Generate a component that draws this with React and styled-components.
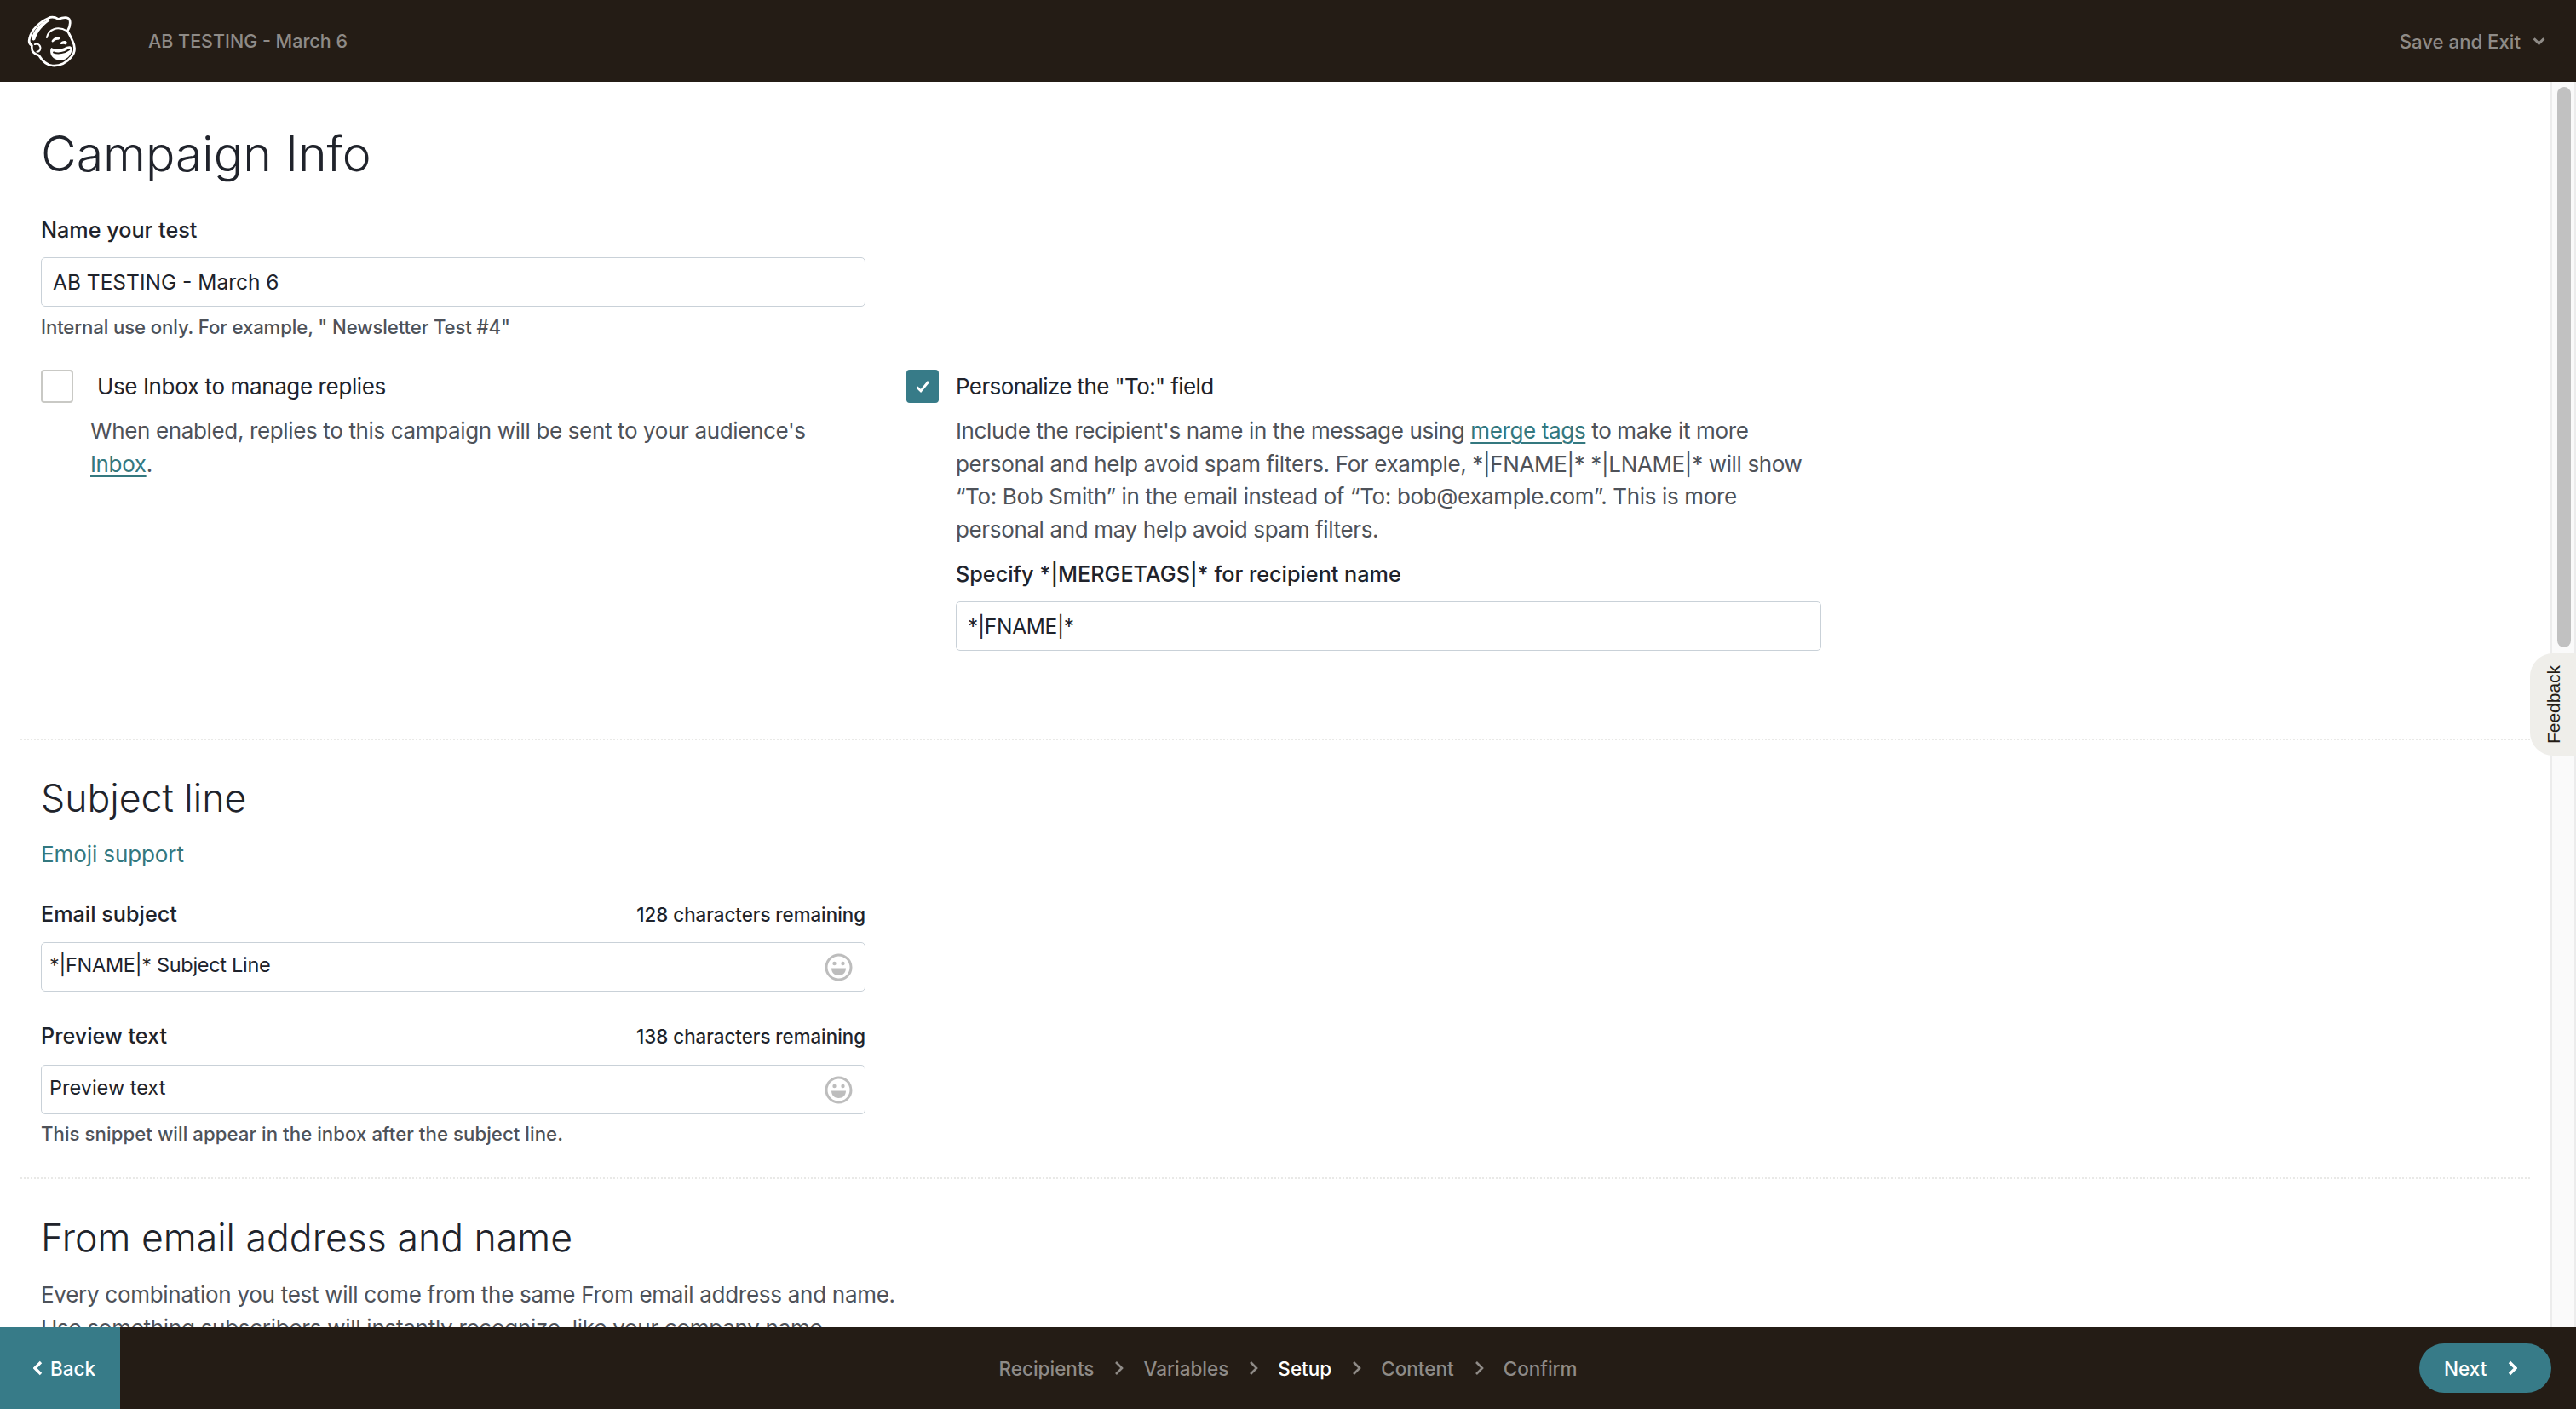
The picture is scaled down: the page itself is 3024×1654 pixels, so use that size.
import React from "react";
import styled, { createGlobalStyle } from "styled-components";

const GlobalStyle = createGlobalStyle`
  html, body {
    margin: 0;
    padding: 0;
    height: 100%;
    overflow: hidden;
    background: #fff;
  }
  * {
    box-sizing: border-box;
  }
`;

const Page = styled.div`
  width: 3024px;
  height: 1654px;
  display: flex;
  flex-direction: column;
  font-family: Inter, "Liberation Sans", sans-serif;
  color: #241c15;
`;

const TopBar = styled.header`
  height: 96px;
  flex: none;
  background: #241c15;
  display: flex;
  align-items: center;
  padding: 0 30px 0 31px;
`;

const CampaignName = styled.span`
  margin-left: 83px;
  font-size: 21.5px;
  font-weight: 500;
  color: #8f8b87;
`;

const SaveExit = styled.div`
  margin-left: auto;
  margin-right: 6px;
  display: flex;
  align-items: center;
  gap: 14px;
  font-size: 22.2px;
  font-weight: 500;
  color: #8f8b87;
`;

const Body = styled.div`
  flex: 1;
  min-height: 0;
  display: flex;
  position: relative;
`;

const Scroller = styled.main`
  flex: 1;
  min-width: 0;
  overflow: hidden;
  padding: 0 24px;
`;

const Track = styled.div`
  width: 30px;
  flex: none;
  background: #fafafa;
  border-left: 2px solid #ececec;
  border-right: 2px solid #ececec;
  padding: 6px 4px 0 6px;
`;

const Thumb = styled.div`
  height: 658px;
  border-radius: 8px;
  background: #c1c1c1;
`;

const Feedback = styled.div`
  position: absolute;
  top: 671px;
  right: 0;
  width: 54px;
  height: 120px;
  border-radius: 27px 0 0 27px;
  background: #efeeea;
  display: flex;
  align-items: center;
  justify-content: center;
  font-family: "Liberation Sans", Arial, sans-serif;
  font-size: 21px;
  color: #241c15;

  & span {
    transform: translateX(1px) rotate(-90deg);
  }
`;

const Section = styled.section`
  padding: ${(p) => p.$pad || "0 24px"};
  border-bottom: ${(p) => (p.$rule ? "2px dotted #e9e9e7" : "none")};
`;

const PageTitle = styled.h1`
  margin: 0;
  font-size: 57.2px;
  line-height: 72px;
  font-weight: 300;
  color: #20232b;
`;

const SectionTitle = styled.h2`
  margin: 0;
  font-size: 44.6px;
  line-height: 56px;
  font-weight: 300;
  color: #20232b;
`;

const Label = styled.div`
  margin: ${(p) => p.$margin || "0"};
  font-size: 25.2px;
  line-height: 34px;
  font-weight: 500;
  color: #20232b;
`;

const LabelRow = styled.div`
  width: 968px;
  margin-top: ${(p) => p.$top};
  display: flex;
  justify-content: space-between;
  align-items: center;
`;

const Remaining = styled.span`
  font-size: 22.3px;
  font-weight: 500;
  color: #20232b;
`;

const Field = styled.div`
  width: ${(p) => p.$width || "968px"};
  height: 58px;
  margin: ${(p) => p.$margin || "0"};
  padding: 0 ${(p) => p.$right || "13px"} 0 ${(p) => p.$left || "13px"};
  border: 1.5px solid #c9d1d8;
  border-radius: 5px;
  background: #fff;
  display: flex;
  align-items: center;
  justify-content: space-between;
  color: #20232b;
`;

const FieldText = styled.span`
  font-size: ${(p) => p.$size || "24.5px"};
  letter-spacing: ${(p) => p.$track || "0"};
  transform: translateY(${(p) => p.$lift || "0"});
`;

const Help = styled.div`
  margin-top: ${(p) => p.$top};
  font-size: 22.2px;
  line-height: 32px;
  font-weight: 500;
  letter-spacing: ${(p) => p.$track || "0"};
  color: #4e5259;
`;

const OptionGrid = styled.div`
  display: grid;
  grid-template-columns: 1016px 1100px;
  margin-top: 34px;
`;

const Option = styled.div`
  display: flex;
  flex-direction: column;
`;

const OptionHead = styled.div`
  display: flex;
  align-items: center;
  gap: ${(p) => p.$gap};
  height: 39px;
  font-size: 26px;
  letter-spacing: ${(p) => p.$track};
  color: #20232b;
`;

const Box = styled.div`
  width: 38px;
  height: 39px;
  flex: none;
  border-radius: 4px;
  background: ${(p) => (p.$on ? "#377b88" : "#fff")};
  border: 2px solid ${(p) => (p.$on ? "#377b88" : "#c9c9c5")};
  display: flex;
  align-items: center;
  justify-content: center;
`;

const Description = styled.p`
  margin: ${(p) => p.$margin};
  max-width: ${(p) => p.$max};
  font-size: 26px;
  line-height: 38.5px;
  letter-spacing: ${(p) => p.$track || "-0.36px"};
  color: #4e5259;
`;

const TextLink = styled.a`
  color: #34787f;
  text-decoration: underline;
  text-underline-offset: 4px;
  text-decoration-thickness: 2px;
`;

const PlainLink = styled.a`
  display: block;
  margin-top: 19px;
  font-size: 26px;
  line-height: 38px;
  letter-spacing: -0.1px;
  color: #34787f;
`;

const BottomBar = styled.footer`
  height: 96px;
  flex: none;
  background: #241c15;
  display: grid;
  grid-template-columns: 1fr auto 1fr;
  align-items: center;
`;

const BackButton = styled.div`
  width: 141px;
  height: 96px;
  padding-left: 39px;
  background: #377b88;
  color: #fff;
  display: flex;
  align-items: center;
  gap: 8px;
  font-size: 22.5px;
  font-weight: 500;
`;

const Steps = styled.nav`
  display: flex;
  align-items: center;
  gap: 23px;
`;

const Step = styled.span`
  font-size: 22.5px;
  font-weight: 500;
  color: ${(p) => (p.$active ? "#fff" : "#8f8b87")};
`;

const NextButton = styled.div`
  justify-self: end;
  margin-right: 29px;
  width: 155px;
  height: 58px;
  padding-left: 29px;
  border-radius: 29px;
  background: #377b88;
  color: #fff;
  display: flex;
  align-items: center;
  gap: 24px;
  font-size: 22.5px;
  font-weight: 500;
`;

const Logo = () => (
  <svg width="60" height="62" viewBox="90 52 176 184" aria-hidden="true">
    <path
      fill="#241c15"
      stroke="#fff"
      strokeWidth="8"
      strokeLinejoin="round"
      d="M100 135C105 105 140 75 165 65 175 60 190 62 200 68 215 62 235 58 240 72 244 88 238 100 232 110 240 120 245 135 250 145 260 165 258 185 245 200 230 220 205 232 180 230 160 228 145 215 133 195 120 190 105 185 108 160 98 155 97 145 100 135Z"
    />
    <path
      fill="#fff"
      d="M107 134C112 108 138 82 164 70 170 68 172 72 168 76 146 92 128 112 120 138 116 146 106 142 107 134Z"
    />
    <path
      fill="none"
      stroke="#fff"
      strokeWidth="6"
      strokeLinecap="round"
      d="M160 132C166 104 196 90 232 110"
    />
    <path
      fill="none"
      stroke="#fff"
      strokeWidth="6"
      strokeLinecap="round"
      d="M118 156C130 150 142 162 136 176 134 180 130 182 126 182"
    />
    <path
      fill="#fff"
      d="M176 168C186 174 206 176 222 168 232 162 244 160 247 168 250 182 240 200 224 208 206 216 188 210 178 198 172 190 170 174 176 168Z"
    />
    <path
      fill="none"
      stroke="#241c15"
      strokeWidth="6"
      strokeLinecap="round"
      d="M184 184C200 190 222 186 238 174"
    />
    <path
      fill="#fff"
      d="M178 142C184 132 196 128 204 132 208 136 204 140 198 140 190 140 186 144 182 148 178 150 175 146 178 142ZM208 150C214 142 226 142 230 148 232 154 228 158 222 156 216 154 212 156 210 156 206 156 206 152 208 150Z"
    />
  </svg>
);

const Chevron = ({ dir = "right", size = 18, color = "#fff", width = 3.4 }) => (
  <svg width={size} height={size * 1.5} viewBox="0 0 12 18" aria-hidden="true">
    <path
      d={dir === "right" ? "M3 2l7 7-7 7" : "M9 2L2 9l7 7"}
      fill="none"
      stroke={color}
      strokeWidth={width}
    />
  </svg>
);

const ChevronDown = () => (
  <svg width="15" height="11" viewBox="0 0 14 10" aria-hidden="true">
    <path d="M1.5 2l5.5 5.5L12.5 2" fill="none" stroke="#8f8b87" strokeWidth="2.8" />
  </svg>
);

const Check = () => (
  <svg width="20" height="20" viewBox="0 0 20 20" aria-hidden="true">
    <path d="M3.5 10.5l4.5 4.5 9-11" fill="none" stroke="#fff" strokeWidth="2.8" />
  </svg>
);

const Smiley = () => (
  <svg width="33" height="33" viewBox="0 0 33 33" aria-hidden="true">
    <circle cx="16.5" cy="16.5" r="14.5" fill="none" stroke="#bdbdbd" strokeWidth="3" />
    <circle cx="11.5" cy="12" r="2.2" fill="#bdbdbd" />
    <circle cx="21.5" cy="12" r="2.2" fill="#bdbdbd" />
    <path d="M8 17.5h17c0 5-3.5 8.5-8.5 8.5S8 22.5 8 17.5z" fill="#bdbdbd" />
  </svg>
);

const STEPS = ["Recipients", "Variables", "Setup", "Content", "Confirm"];

const App = () => {
  return (
    <Page>
      <GlobalStyle />
      <TopBar>
        <Logo />
        <CampaignName>AB TESTING - March 6</CampaignName>
        <SaveExit>
          Save and Exit
          <ChevronDown />
        </SaveExit>
      </TopBar>

      <Body>
        <Scroller>
          <Section $rule $pad="49px 24px 103px">
            <PageTitle>Campaign Info</PageTitle>
            <Label $margin="36px 0 15px">Name your test</Label>
            <Field>
              <FieldText>AB TESTING - March 6</FieldText>
            </Field>
            <Help $top="8px" $track="-0.12px">
              Internal use only. For example, " Newsletter Test #4"
            </Help>
            <OptionGrid>
              <Option>
                <OptionHead $gap="28px" $track="-0.38px">
                  <Box />
                  Use Inbox to manage replies
                </OptionHead>
                <Description $margin="14px 0 0 58px" $max="900px">
                  When enabled, replies to this campaign will be sent to your
                  audience's <TextLink>Inbox</TextLink>.
                </Description>
              </Option>
              <Option>
                <OptionHead $gap="20px" $track="-0.6px">
                  <Box $on>
                    <Check />
                  </Box>
                  Personalize the "To:" field
                </OptionHead>
                <Description $margin="14px 0 0 58px" $max="1016px">
                  Include the recipient's name in the message using{" "}
                  <TextLink>merge tags</TextLink> to make it more personal and
                  help avoid spam filters. For example, *|FNAME|* *|LNAME|* will
                  show “To: Bob Smith” in the email instead of “To:
                  bob@example.com”. This is more personal and may help avoid
                  spam filters.
                </Description>
                <Label $margin="16px 0 15px 58px">
                  Specify *|MERGETAGS|* for recipient name
                </Label>
                <Field $width="1016px" $margin="0 0 0 58px">
                  <FieldText $track="-0.3px">*|FNAME|*</FieldText>
                </Field>
              </Option>
            </OptionGrid>
          </Section>

          <Section $rule $pad="40px 24px 35px">
            <SectionTitle>Subject line</SectionTitle>
            <PlainLink>Emoji support</PlainLink>
            <LabelRow $top="34px">
              <Label>Email subject</Label>
              <Remaining>128 characters remaining</Remaining>
            </LabelRow>
            <Field $left="9px" $right="14px" $margin="16px 0 0">
              <FieldText $size="23.5px" $track="-0.3px" $lift="-3px">
                *|FNAME|* Subject Line
              </FieldText>
              <Smiley />
            </Field>
            <LabelRow $top="35px">
              <Label>Preview text</Label>
              <Remaining>138 characters remaining</Remaining>
            </LabelRow>
            <Field $left="9px" $right="14px" $margin="17px 0 0">
              <FieldText $size="23.5px" $lift="-3px">
                Preview text
              </FieldText>
              <Smiley />
            </Field>
            <Help $top="7px" $track="0.06px">
              This snippet will appear in the inbox after the subject line.
            </Help>
          </Section>

          <Section $pad="41px 24px 0">
            <SectionTitle>From email address and name</SectionTitle>
            <Description $margin="20px 0 0" $max="1030px" $track="-0.28px">
              Every combination you test will come from the same From email
              address and name. Use something subscribers will instantly
              recognize, like your company name.
            </Description>
          </Section>
        </Scroller>
        <Track>
          <Thumb />
        </Track>
        <Feedback>
          <span>Feedback</span>
        </Feedback>
      </Body>

      <BottomBar>
        <BackButton>
          <Chevron dir="left" size={12} />
          Back
        </BackButton>
        <Steps>
          {STEPS.map((step, i) => (
            <React.Fragment key={step}>
              {i > 0 && <Chevron size={12} color="#8f8b87" width={2.6} />}
              <Step $active={step === "Setup"}>{step}</Step>
            </React.Fragment>
          ))}
        </Steps>
        <NextButton>
          Next
          <Chevron size={12} />
        </NextButton>
      </BottomBar>
    </Page>
  );
};

export default App;
